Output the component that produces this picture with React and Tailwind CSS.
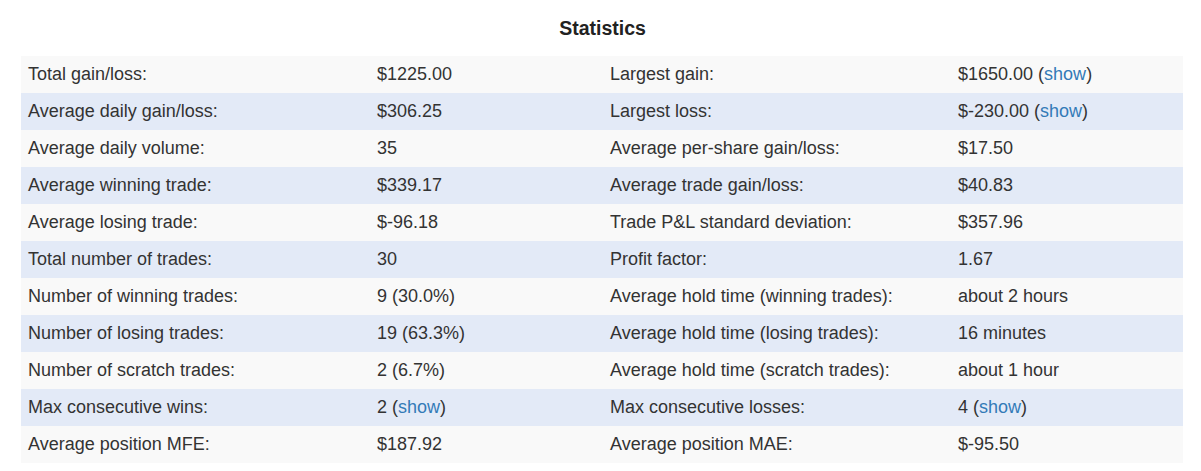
import React from "react";

const rows = [
  ["Total gain/loss:", "$1225.00", "Largest gain:", "$1650.00", true],
  ["Average daily gain/loss:", "$306.25", "Largest loss:", "$-230.00", true],
  ["Average daily volume:", "35", "Average per-share gain/loss:", "$17.50"],
  ["Average winning trade:", "$339.17", "Average trade gain/loss:", "$40.83"],
  ["Average losing trade:", "$-96.18", "Trade P&L standard deviation:", "$357.96"],
  ["Total number of trades:", "30", "Profit factor:", "1.67"],
  ["Number of winning trades:", "9 (30.0%)", "Average hold time (winning trades):", "about 2 hours"],
  ["Number of losing trades:", "19 (63.3%)", "Average hold time (losing trades):", "16 minutes"],
  ["Number of scratch trades:", "2 (6.7%)", "Average hold time (scratch trades):", "about 1 hour"],
  ["Max consecutive wins:", "2", "Max consecutive losses:", "4", true, true],
  ["Average position MFE:", "$187.92", "Average position MAE:", "$-95.50"],
];

function Show() {
  return (
    <>
      {" "}(<a href="#" className="text-[#337ab7]">show</a>)
    </>
  );
}

export default function App() {
  return (
    <div className="bg-white text-[#333] font-['Liberation_Sans',Arial,sans-serif] text-[18px] px-[21px] pt-[14px]">
      <h3 className="text-center font-bold text-[19.5px] leading-[28px] mb-[14px] pl-[4px] text-[#222]">Statistics</h3>
      <table className="w-[1162px] border-collapse table-fixed">
        <colgroup>
          <col className="w-[348px]" />
          <col className="w-[233px]" />
          <col className="w-[348px]" />
          <col className="w-[233px]" />
        </colgroup>
        <tbody>
          {rows.map((r, i) => (
            <tr key={i} className={i % 2 === 0 ? "bg-[#f9f9f9]" : "bg-[#e3eaf7]"}>
              <td className="h-[37px] pl-[7px] pr-[8px] py-0 align-middle">{r[0]}</td>
              <td className="px-[8px] align-middle">
                {r[1]}
                {r[5] && <Show />}
              </td>
              <td className="px-[8px] align-middle">{r[2]}</td>
              <td className="px-[8px] align-middle">
                {r[3]}
                {r[4] && <Show />}
              </td>
            </tr>
          ))}
        </tbody>
      </table>
    </div>
  );
}
